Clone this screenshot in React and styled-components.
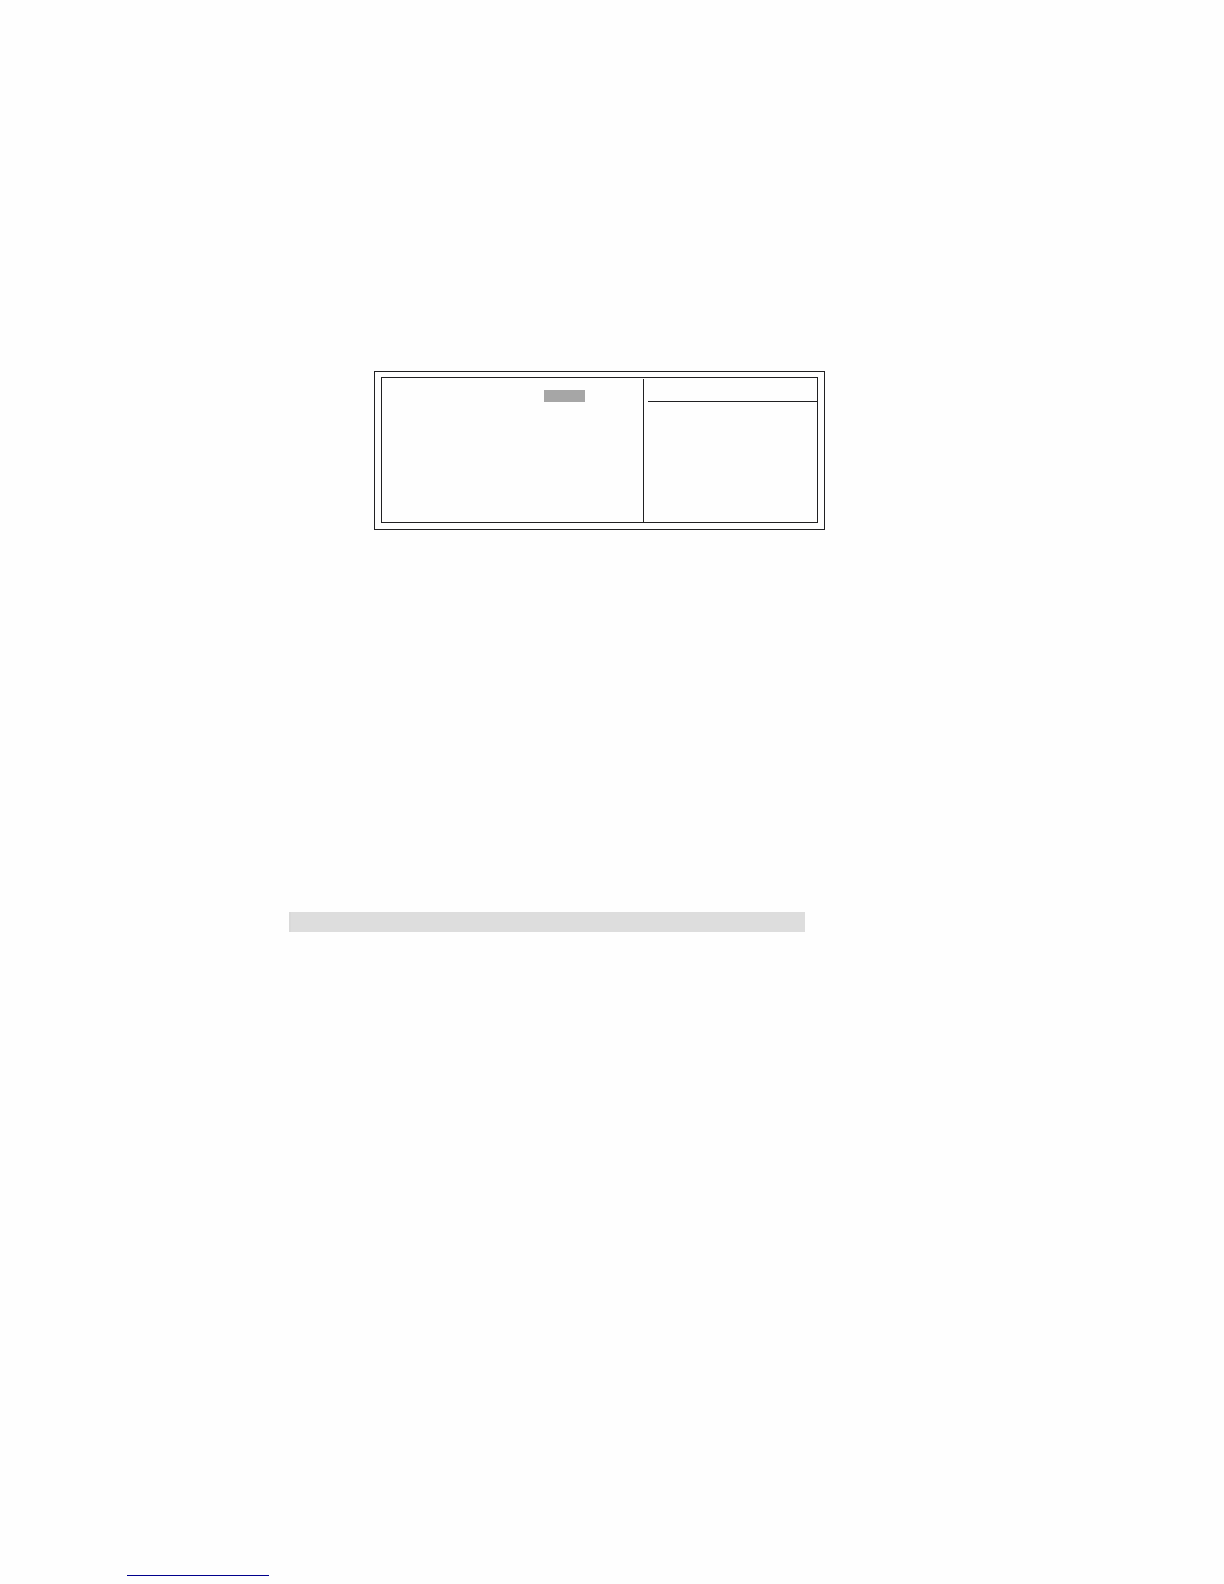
import React from "react";
import styled, { createGlobalStyle } from "styled-components";

const ink = "#202022";

const GlobalStyle = createGlobalStyle`
  *, *::before, *::after { box-sizing: border-box; }
  body {
    margin: 0;
    background: #fefefe;
    font-family: "Liberation Sans", Arial, sans-serif;
  }
`;

const Page = styled.main`
  display: flex;
  flex-direction: column;
  padding: 371px 0 8px;
`;

const SetupFrame = styled.section`
  margin: 0 399px 0 374px;
  padding: 5px 6px 6px;
  border: 1px solid ${ink};
`;

const SetupScreen = styled.div`
  display: grid;
  grid-template-columns: 3fr 2fr;
  border: 1px solid ${ink};
  min-height: 146px;
`;

const OptionsPane = styled.div`
  padding: 12px 58px;
  display: flex;
  justify-content: flex-end;
`;

const SelectedValue = styled.div`
  width: 41px;
  height: 12px;
  background: #a6a6a6;
`;

const HelpPane = styled.aside`
  margin-top: 1px;
  padding-left: 4px;
  border-left: 1px solid ${ink};
`;

const HelpHeader = styled.header`
  height: 23px;
  border-bottom: 1px solid ${ink};
`;

const TableHeading = styled.div`
  height: 20px;
  margin: 382px 419px 643px 289px;
  background: #dddddd;
  border-left: 2px solid #d9d9d9;
`;

const FooterRule = styled.hr`
  width: 142px;
  height: 1px;
  margin: 0 0 0 127px;
  border: 0;
  background: #00008c;
`;

export default function App() {
  return (
    <>
      <GlobalStyle />
      <Page>
        <SetupFrame>
          <SetupScreen>
            <OptionsPane>
              <SelectedValue />
            </OptionsPane>
            <HelpPane>
              <HelpHeader />
            </HelpPane>
          </SetupScreen>
        </SetupFrame>
        <TableHeading />
        <FooterRule />
      </Page>
    </>
  );
}
